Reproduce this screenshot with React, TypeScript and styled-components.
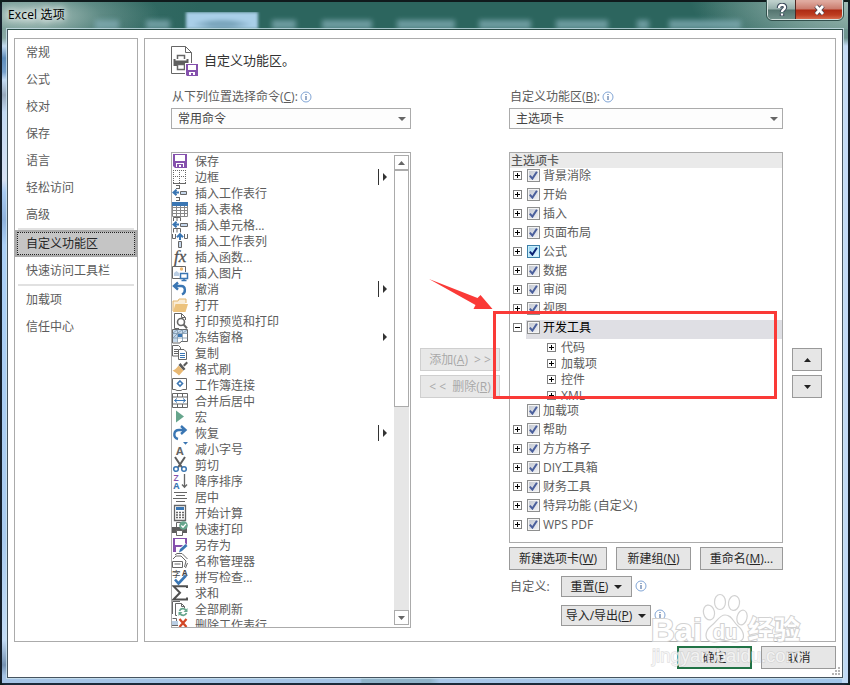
import React from 'react';
import styled, { createGlobalStyle, css } from 'styled-components';

const GlobalStyle = createGlobalStyle`
  *, *::before, *::after { box-sizing: border-box; }
  body { margin: 0; background: #0d1f1d; }
  u { text-underline-offset: 1px; text-decoration-thickness: 1px; }
`;

const font = `"Open Sans", "Noto Sans CJK SC", sans-serif`;

/* ---------- window chrome ---------- */

const WindowFrame = styled.div`
  position: relative;
  display: flex;
  flex-direction: column;
  width: 850px;
  height: 685px;
  padding: 0 7px 7px 7px;
  overflow: hidden;
  font: 12px/16px ${font};
  color: #5c5c5c;
  border-radius: 7px 7px 6px 6px;
  background:
    linear-gradient(90deg, #15202c 2px, transparent 2px, transparent 848px, #15202c 848px),
    linear-gradient(180deg, #101a1c 2px, transparent 2px, transparent 683px, #1c2a3a 683px),
    radial-gradient(ellipse 130px 40px at 30px 16px, rgba(225, 235, 230, 0.75), rgba(170, 195, 190, 0.35) 55%, transparent) 0 0 / 850px 29px no-repeat,
    radial-gradient(ellipse 160px 60px at 850px 0, rgba(190, 212, 206, 0.75), transparent) 0 0 / 850px 29px no-repeat,
    linear-gradient(90deg, #40746e, #2c655e 200px, #2c655e 700px, #528079) 0 0 / 850px 29px no-repeat,
    linear-gradient(180deg, #6d948e 0, #8aa9a5 38px, #c3daf0 46px, #5f8dbb 58px, #77a0cb 72px, #c5dcf4 80px, #98a9bd 95px, #c3d9f3 112px, #d7e1f3 180px, #a9cbf2 192px, #8fb2dc 220px, #abd0f7 245px, #a9cbef 540px, #c3dcf6 640px, #7592b2 665px, #a5c4e6 676px) 0 0 / 8px 100% no-repeat,
    linear-gradient(180deg, #789b96 0, #6f9590 38px, #c5dbf5 46px, #c0daf6 100%) 842px 0 / 8px 100% no-repeat,
    linear-gradient(90deg, #a5c4e6 360px, #8fb3c9 362px, #8fb3c9 430px, #a9c7e9 440px, #a3c6ea);
`;

const TitleBar = styled.header`
  display: flex;
  flex: 0 0 29px;
  height: 29px;
  align-items: flex-start;
  justify-content: space-between;
`;

const WindowTitle = styled.h1`
  margin: 0;
  padding: 6px 0 0 1px;
  font: 400 12px/17px ${font};
  letter-spacing: 0.15px;
  color: #000;
  text-shadow: 0 0 6px #fff, 0 0 8px #fff;
`;

const GhostRibbon = styled.div`
  position: absolute;
  left: 92px;
  top: 12px;
  display: flex;
  align-items: flex-end;
  width: 660px;
  height: 17px;
  overflow: hidden;
`;

const GhostTab = styled.i<{ $w: number; $gap: number; $active?: boolean }>`
  flex: none;
  width: ${p => p.$w}px;
  margin-left: ${p => p.$gap}px;
  height: ${p => (p.$active ? 17 : 9)}px;
  background: ${p => (p.$active ? '#a5cbe2' : '#83aeb6')};
  opacity: ${p => (p.$active ? 1 : 0.75)};
  filter: blur(${p => (p.$active ? 1.5 : 2.5)}px);
  ${p => p.$active && css`
    background: radial-gradient(ellipse 30px 6px at 50% 72%, #7ba6bd 40%, transparent), #a9cfe8;
  `}
`;

const CaptionButtons = styled.div`
  display: flex;
  height: 20px;
  border: 1px solid #d5e2df;
  border-top: 0;
  border-radius: 0 0 5px 5px;
  overflow: hidden;
  outline: 1px solid #31504c;
  z-index: 1;
`;

const CaptionButton = styled.button<{ $close?: boolean }>`
  display: grid;
  place-items: center;
  width: ${p => (p.$close ? 47 : 27)}px;
  height: 20px;
  padding: 0;
  border: 0;
  border-left: ${p => (p.$close ? '1px solid #4f2723' : '0')};
  background: ${p =>
    p.$close
      ? 'linear-gradient(180deg, #e0aba0 1px, #ca7b6d 9px, #ad2a13 10px, #bd3c20 15px, #dd7658)'
      : 'linear-gradient(180deg, #bed0cc 1px, #94aeaa 9px, #54746f 10px, #73938d 20px)'};
`;

const Client = styled.div`
  position: relative;
  display: flex;
  flex-direction: column;
  flex: none;
  width: 836px;
  height: 649px;
  border: 1px solid #46545f;
  border-top-color: #284b46;
  background: #fff;
  outline: 1px solid rgba(205, 228, 238, 0.75);
  padding: 8px 6px;
`;

const Panes = styled.div`
  display: flex;
  gap: 6px;
  height: 604px;
`;

/* ---------- sidebar ---------- */

const Sidebar = styled.nav`
  display: flex;
  flex-direction: column;
  width: 124px;
  border: 1px solid #ababab;
`;

const NavItem = styled.a<{ $active?: boolean }>`
  flex: none;
  height: 27px;
  padding-left: 11px;
  line-height: 27px;
  color: ${p => (p.$active ? '#262626' : '#5c5c5c')};
  ${p => p.$active && css`
    background: #c5c5c5;
    border: 2px solid #aaa;
    padding-left: 9px;
    line-height: 23px;
    outline: 1px dotted #222;
    outline-offset: -3px;
  `}
`;

const NavRule = styled.hr`
  flex: none;
  width: 116px;
  height: 2px;
  margin: 0 auto;
  border: 0;
  background: #e1e1e1;
`;

/* ---------- main pane ---------- */

const Main = styled.main`
  width: 692px;
  border: 1px solid #ababab;
  padding: 7px 0 0 26px;
`;

const Heading = styled.div`
  display: flex;
  gap: 5px;
  height: 43px;
`;

const HeadingText = styled.h2`
  margin: 4px 0 0;
  font: 400 13px/20px ${font};
  color: #333;
`;

const Columns = styled.div`
  display: grid;
  grid-template-columns: 240px 80px 274px 30px;
  column-gap: 9px;
  align-items: start;
`;

const Label = styled.label`
  display: flex;
  align-items: center;
  gap: 2px;
  height: 16px;
  margin: 0 0 3px 1px;
`;

const Select = styled.div`
  display: flex;
  align-items: center;
  justify-content: space-between;
  height: 21px;
  margin-bottom: 23px;
  padding: 0 4px 0 6px;
  border: 1px solid #ababab;
  background: #fdfdfd;
  color: #444;
`;

const CommandBox = styled.div`
  display: flex;
  height: 476px;
  border: 1px solid #ababab;
  overflow: hidden;
`;

const CommandList = styled.ul`
  flex: 1;
  margin: 0;
  padding: 0;
  list-style: none;
`;

const Command = styled.li`
  display: flex;
  align-items: center;
  height: 16px;
  white-space: nowrap;

  > svg { flex: none; margin-right: 7px; overflow: visible; }
`;

const CommandLabel = styled.span`
  padding-top: 2px;
`;

const Flyout = styled.span<{ $split: boolean }>`
  display: flex;
  align-items: center;
  height: 16px;
  width: 15px;
  margin-left: auto;
  padding-left: 4px;
  border-left: ${p => (p.$split ? '1px solid #333' : '1px solid transparent')};
`;

const ScrollBar = styled.div`
  display: flex;
  flex-direction: column;
  width: 15px;
  margin: 2px 1px;
  background: #e6e6e6;
`;

const ScrollButton = styled.div`
  display: grid;
  place-items: center;
  flex: none;
  height: 15px;
  border: 1px solid #ababab;
  background: #fff;
`;

const ScrollThumb = styled.div`
  flex: none;
  height: 237px;
  margin-bottom: auto;
  border: 1px solid #ababab;
  background: #fff;
`;

const Stack = styled.div<{ $top: number }>`
  display: flex;
  flex-direction: column;
  gap: 4px;
  padding-top: ${p => p.$top}px;
`;

const Button = styled.button<{ $w: number; $h?: number; $primary?: boolean }>`
  display: flex;
  align-items: center;
  justify-content: center;
  gap: 6px;
  flex: none;
  width: ${p => p.$w}px;
  height: ${p => p.$h ?? 23}px;
  padding: 0;
  font: 12px/16px ${font};
  white-space: nowrap;
  color: #262626;
  background: #e6e6e6;
  border: ${p => (p.$primary ? '2px solid #217346' : '1px solid #999')};

  &:disabled {
    color: #a8a8a8;
    background: #e8e8e8;
    border-color: #cfcfcf;
  }
`;

/* ---------- ribbon tree ---------- */

const Tree = styled.div`
  height: 391px;
  margin-bottom: 4px;
  border: 1px solid #ababab;
  overflow: hidden;
`;

const TreeHeader = styled.div`
  height: 15px;
  padding-left: 1px;
  line-height: 15px;
  font-weight: 500;
  background: #eaeaea;
  color: #5a5a5a;
`;

const TreeRow = styled.div<{ $selected?: boolean }>`
  display: flex;
  height: 19px;
  padding-left: 3px;
  padding-top: 1px;
  line-height: 14px;
  color: ${p => (p.$selected ? '#000' : '#5c5c5c')};
  ${p => p.$selected && css`
    background: linear-gradient(90deg, transparent 16px, #dfdfe4 16px);
  `}
`;

const ChildRow = styled.div`
  display: flex;
  align-items: center;
  height: 16px;
  padding-left: 37px;
  line-height: 16px;
`;

const ChildLabel = styled.span`
  padding-top: 2px;
`;

const Expander = styled.span<{ $state: 'plus' | 'minus' | 'none'; $child?: boolean }>`
  flex: none;
  width: 9px;
  height: 9px;
  margin: ${p => (p.$child ? '0 5px 0 0' : '2px 5px 0 0')};
  ${p => p.$state !== 'none' && css`
    border: 1px solid #808080;
    background:
      linear-gradient(#000, #000) center / 5px 1px no-repeat,
      linear-gradient(#000, #000) center / 1px ${p.$state === 'plus' ? 5 : 1}px no-repeat,
      #fff;
  `}
`;

const CheckBox = styled.span<{ $hot?: boolean }>`
  display: grid;
  place-items: center;
  flex: none;
  width: 13px;
  height: 13px;
  margin-right: 3px;
  border: 1px solid ${p => (p.$hot ? '#3c7fa8' : '#8e8f8f')};
  box-shadow: inset 0 0 0 1px ${p => (p.$hot ? '#c9eefb' : '#f4f4f4')};
  background: ${p => (p.$hot ? 'linear-gradient(135deg, #8fd5f5, #eefaff)' : 'linear-gradient(135deg, #bfc4ce, #f4f5f8)')};
`;

const ButtonRow = styled.div<{ $mb: number; $indent?: number; $gap?: number }>`
  display: flex;
  gap: ${p => p.$gap ?? 9}px;
  margin-bottom: ${p => p.$mb}px;
  padding-left: ${p => p.$indent ?? 0}px;
`;

const CustomLabel = styled.span`
  width: 43px;
  padding: 3px 0 0 1px;
  letter-spacing: 0.2px;
  white-space: nowrap;
`;

const InfoWrap = styled.span`
  height: 19px;
  display: flex;
  align-items: center;
`;

const Footer = styled.footer`
  display: flex;
  justify-content: flex-end;
  gap: 9px;
  padding-top: 4px;
`;

const Grip = styled.svg`
  position: absolute;
  right: 1px;
  bottom: 1px;
`;

const Highlight = styled.div`
  position: absolute;
  left: 493px;
  top: 311px;
  width: 284px;
  height: 88px;
  border: 3px solid #fa3a37;
  pointer-events: none;
`;

const Pointer = styled.svg`
  position: absolute;
  left: 428px;
  top: 277px;
`;

const Watermark = styled.svg`
  position: absolute;
  left: 645px;
  top: 588px;
`;

/* ---------- glyphs ---------- */

const G = '#666';
const B = '#3a76b3';
const P = '#8551ad';
const N = '#66a58c';
const R = '#d24726';

const Tri = ({ dir, color = '#444', w = 7, h = 4 }: { dir: 'up' | 'down' | 'right'; color?: string; w?: number; h?: number }) => (
  <svg width={w} height={h} viewBox={`0 0 ${w} ${h}`}>
    <path
      fill={color}
      d={dir === 'up' ? `M0 ${h}L${w / 2} 0L${w} ${h}Z` : dir === 'down' ? `M0 0H${w}L${w / 2} ${h}Z` : `M0 0L${w} ${h / 2}L0 ${h}Z`}
    />
  </svg>
);

const Info = () => (
  <svg width="12" height="12" viewBox="0 0 12 12">
    <circle cx="6" cy="6" r="5" fill="#fff" stroke="#82a6d6" />
    <path d="M6 5v4M6 3v1" stroke="#46699e" strokeWidth="1.1" />
  </svg>
);

const Check = ({ hot }: { hot?: boolean }) => (
  <svg width="9" height="9" viewBox="0 0 9 9">
    <path d="M0.8 4.6L3.4 7.6L7.9 0.8" fill="none" stroke={hot ? '#0a2173' : '#4a5f9c'} strokeWidth="2" />
  </svg>
);

const icons: Record<string, React.ReactNode> = {
  save: (
    <>
      <path d="M1 1h14v14H3l-2-2z" fill={P} />
      <path d="M3 2h10v6H3zM4 10h8v4H4z" fill="#fff" />
      <path d="M5 11h6v3H9v-2H7v2H5z" fill={P} />
    </>
  ),
  border: (
    <>
      <path d="M1.5 1v13M7.5 1v13M13.5 1v13M1 1.5h13M1 7.5h13" stroke={G} strokeDasharray="1 1" />
      <path d="M1 14.5h13" stroke={G} />
    </>
  ),
  insRow: (
    <>
      <path d="M4 .5h4M7.5 0v3.5M4 3.5h4M4 12.5h4M7.5 12v4M4 15.5h4" stroke={G} fill="none" />
      <path d="M7 7.5H2M4.5 4.7L1.5 7.5l3 2.8" stroke={B} strokeWidth="2" fill="none" />
      <path d="M8.5 6.5h6v3h-6z" fill="#c5d6ea" stroke={G} />
    </>
  ),
  table: (
    <>
      <path d="M.5 2.5h15v13H.5zM.5 6.5h15M.5 9.5h15M.5 12.5h15M4.5 4v12M8.5 4v12M12.5 4v12" stroke="#888" fill="#fff" />
      <path d="M0 1h16v4H0z" fill={B} />
    </>
  ),
  insCell: (
    <>
      <path d="M1.5 4V.5h7V4M5 .5V4M1.5 15.5v-4h7v4M5 11.5v4" stroke={G} fill="none" />
      <path d="M7 7.5H2M4.5 4.7L1.5 7.5l3 2.8" stroke={B} strokeWidth="2" fill="none" />
      <path d="M8.5 6.5h7v3h-7z" fill="#c5d6ea" stroke={G} />
    </>
  ),
  insCol: (
    <>
      <path d="M.5 1v4.5h3V1M12.5 1v4.5h3V1" stroke={G} fill="none" />
      <path d="M8 7V2M5 4.2L8 1.2l3 3" stroke={B} strokeWidth="2" fill="none" />
      <path d="M6.5 8.5h3v6h-3z" fill="#c5d6ea" stroke={G} />
    </>
  ),
  fx: (
    <text x="2" y="12.5" fontFamily="Liberation Serif" fontStyle="italic" fontSize="17" fill="#505050" stroke="#505050" strokeWidth=".3">fx</text>
  ),
  picture: (
    <>
      <path d="M8 13.5H.5V1.5h13V7" stroke={G} fill="#fff" />
      <circle cx="9.5" cy="4" r="1.7" fill="#eab56f" />
      <path d="M2 11V8l2.500-2L7 8v3z" fill="#b9cde3" />
      <path d="M8.5 8.500h7v5h-7zM12 13.500v1.500M9.500 15.500h5" stroke={B} strokeWidth="1.500" fill="#fff" />
    </>
  ),
  undo: <path d="M6 1.500L2 5l4 3.700M2.500 5h6.700c4.500 0 5 6.500.8 8.500" stroke={B} strokeWidth="2.400" fill="none" />,
  open: (
    <>
      <path d="M1 14V4h5l1-2h7v4" fill="#f9ecd6" stroke="#e3b66f" />
      <path d="M1 15l2.500-8H16l-2.500 8z" fill="#ecc27c" />
    </>
  ),
  preview: (
    <>
      <path d="M7 15.500H2.500V.5h7l4 4V7M9.500.5v4h4" stroke={G} fill="none" />
      <circle cx="9" cy="9" r="3.500" stroke={G} strokeWidth="1.600" fill="#fff" />
      <path d="M11.500 11.500l3.500 3.700" stroke={G} strokeWidth="2" />
    </>
  ),
  freeze: (
    <>
      <path d="M.5.5h15v12H9l-1 1.500H.5z" stroke={G} fill="#fff" />
      <path d="M1 1h14v3H5v9H1z" fill="#c5d9ec" />
      <path d="M.5 4.500h15M.5 9h15M5.500.5v13M10.500.5v12M1 4l4-3M6 4l4-3M11 4l4-3M1 9l4-4" stroke="#7b94ab" strokeWidth=".8" />
      <path d="M6 5h4v3H6z" fill={B} />
    </>
  ),
  copy: (
    <>
      <path d="M.5.500h6l2 2v8.500h-8zM2 4.500h4M2 6.500h4M2 8.500h4" stroke={G} fill="#fff" />
      <path d="M6.500 4.500h5.500l2.500 2.500v7.500h-8z" stroke={G} fill="#fff" />
      <path d="M8 8.500h5M8 10.500h5M8 12.500h5" stroke={B} />
    </>
  ),
  brush: (
    <>
      <path d="M6.500 4.500l5 5-4.500 5c-2-2-4-3.500-6.500-5 2-.5 4-2 6-5z" fill="#e8b873" />
      <path d="M6.500 4l2-2L13.500 8l-2 1.500zM11 4l3.500-3.500L16 2l-3.500 3.500z" fill="#5a5a5a" />
    </>
  ),
  connect: (
    <>
      <path d="M.5 1.500h14v11h-4l-1.500 1h-4l-2-1H.5z" stroke={G} fill="#fff" />
      <path d="M8 4l2.500 2.500L8 9 5.500 6.500z" stroke={B} strokeWidth="1.600" fill="none" />
    </>
  ),
  merge: (
    <>
      <path d="M.5.500h15v14H.5zM.5 4h15M.5 11h15M5.500.500V4M10.500.500V4M5.500 11v3.500M10.500 11v3.500" stroke={G} fill="#fff" />
      <path d="M2.500 7.500h11M5 5.500l-2.500 2L5 9.500M11 5.500l2.500 2-2.500 2" stroke={B} fill="none" />
    </>
  ),
  macro: <path d="M4 1.500l8 6-8 6z" fill={N} />,
  redo: <path d="M9 1l4.500 4L9 9M13 5H7c-5.500 0-6.500 7.500-1 9" stroke={B} strokeWidth="2.400" fill="none" />,
  shrink: (
    <>
      <text x="4" y="14" fontFamily="Open Sans" fontWeight="700" fontSize="11" fill={G}>A</text>
      <path d="M11 1h5l-2.500 2.700z" fill={B} />
    </>
  ),
  cut: (
    <>
      <path d="M3 0l7 10.500M13 0L6 10.500" stroke="#5d5d5d" strokeWidth="2" />
      <circle cx="4" cy="12" r="2.300" stroke={B} strokeWidth="1.500" fill="none" />
      <circle cx="12" cy="12" r="2.300" stroke={B} strokeWidth="1.500" fill="none" />
    </>
  ),
  sort: (
    <>
      <text x="1.500" y="7.500" fontFamily="Open Sans" fontSize="9" fontWeight="600" fill={P}>Z</text>
      <text x="1.200" y="15.500" fontFamily="Open Sans" fontSize="9" fontWeight="700" fill={B}>A</text>
      <path d="M12.500 1v13M10 11.500l2.500 2.700 2.500-2.700" stroke={G} strokeWidth="1.300" fill="none" />
    </>
  ),
  center: <path d="M2 3.500h13M4 6.500h9M1 9.500h14M4 12.500h9" stroke={G} />,
  calc: (
    <>
      <path d="M2.500.500h11v15h-11z" stroke={G} fill="#fff" strokeWidth="1.300" />
      <path d="M4 2h8v3H4z" fill={B} />
      <path d="M4 7.500h8M4 10h8M4 12.500h8" stroke={G} strokeWidth="1.600" strokeDasharray="2 1" />
    </>
  ),
  print: (
    <>
      <path d="M4.500 6V1.500h5V6" stroke={G} fill="#fff" />
      <path d="M0 6h15v6H0z" fill="#5e5e5e" />
      <path d="M4.500 9.500h6v5h-6z" stroke={G} fill="#fff" />
      <circle cx="11.500" cy="4.500" r="4.300" fill={N} />
      <path d="M9.300 4.500l1.700 1.700 3-3.300" stroke="#fff" strokeWidth="1.300" fill="none" />
    </>
  ),
  saveAs: (
    <>
      <path d="M1 1h14v7l-7 7H1z" fill={P} />
      <path d="M3 2h10v6H3zM4 10h6l-3 5H4z" fill="#fff" />
      <path d="M6 16l1.500-4.500L13 6l3 3-5.500 5.500z" fill="#fff" />
      <path d="M7 15.500l1-3.500 5.500-5 2 2-5.500 5z" fill={B} />
    </>
  ),
  names: (
    <>
      <path d="M.5 8.500h10v6H.5zM2.500 11h6" stroke={G} fill="#fff" />
      <path d="M1 6l3-3h5l5 5-1.500 6M3 2L5 .500h5L15.500 6M13.500 15l2-5" stroke={G} fill="none" />
    </>
  ),
  spell: (
    <>
      <text x="0" y="7.500" fontFamily="Noto Sans CJK SC" fontSize="8.500" fill="#444">字</text>
      <text x="10" y="6.500" fontFamily="Open Sans" fontWeight="700" fontSize="8" fill="#444">A</text>
      <path d="M3 10.500l3.500 4L14 6.500" stroke={B} strokeWidth="2.600" fill="none" />
    </>
  ),
  sum: <path d="M15 3V1.200H1.500L8 7.800 1.500 14.500H15V12.500" stroke="#505050" strokeWidth="2" fill="none" />,
  refresh: (
    <>
      <path d="M.5 13V.500H8M5 14.500H3.500v-12h6l3 3V7M9.500 2.500v3h3" stroke={G} fill="none" />
      <path d="M7.500 10c1-3 5-3 6.500-.5M14.500 12c-1 3-5 3-6.500.5" stroke={N} strokeWidth="1.700" fill="none" />
      <path d="M15.500 7v4h-4zM6.500 15v-4h4z" fill={N} />
    </>
  ),
  delRow: (
    <>
      <path d="M.5 1.500h4V4M0 8.500h6" stroke={G} fill="none" />
      <path d="M0 4h6v4H0z" fill="#b9cde3" />
      <path d="M7.500 2l7 8M14.500 2l-7 8" stroke={R} strokeWidth="2.300" />
    </>
  ),
};

const Icon = ({ name }: { name: string }) => (
  <svg width="16" height="16" viewBox="0 0 16 16">{icons[name]}</svg>
);

const RibbonIcon = () => (
  <svg width="28" height="31" viewBox="0 0 28 31">
    <path d="M14 27.500H.5V.500h14l6 6V18M14.500.500v6h6" stroke={G} fill="#fff" />
    <path d="M6.500 13V9.500h7V13" stroke={G} strokeWidth="1.500" fill="#fff" />
    <path d="M2.500 13h2v1.500h11V13h2v7h-15z" fill="#5e5e5e" />
    <path d="M6.500 18.500h7v5h-7z" stroke={G} strokeWidth="1.500" fill="#fff" />
    <path d="M14 17h14v14H14z" fill="#fff" />
    <path d="M15 18h12v12H16l-1-1z" fill={P} />
    <path d="M17 19h8v5h-8zM18 26h6v3h-2v-2h-2v2h-2z" fill="#fff" />
  </svg>
);

/* ---------- data ---------- */

const navGroups = [
  ['常规', '公式', '校对', '保存', '语言', '轻松访问', '高级'],
  ['自定义功能区', '快速访问工具栏'],
  ['加载项', '信任中心'],
];

type Cmd = [icon: string, label: string, flyout?: 'split' | 'menu'];

const commands: Cmd[] = [
  ['save', '保存'],
  ['border', '边框', 'split'],
  ['insRow', '插入工作表行'],
  ['table', '插入表格'],
  ['insCell', '插入单元格...'],
  ['insCol', '插入工作表列'],
  ['fx', '插入函数...'],
  ['picture', '插入图片'],
  ['undo', '撤消', 'split'],
  ['open', '打开'],
  ['preview', '打印预览和打印'],
  ['freeze', '冻结窗格', 'menu'],
  ['copy', '复制'],
  ['brush', '格式刷'],
  ['connect', '工作簿连接'],
  ['merge', '合并后居中'],
  ['macro', '宏'],
  ['redo', '恢复', 'split'],
  ['shrink', '减小字号'],
  ['cut', '剪切'],
  ['sort', '降序排序'],
  ['center', '居中'],
  ['calc', '开始计算'],
  ['print', '快速打印'],
  ['saveAs', '另存为'],
  ['names', '名称管理器'],
  ['spell', '拼写检查...'],
  ['sum', '求和'],
  ['refresh', '全部刷新'],
  ['delRow', '删除工作表行'],
];

interface Tab {
  label: string;
  hot?: boolean;
  leaf?: boolean;
  children?: string[];
}

const tabs: Tab[] = [
  { label: '背景消除' },
  { label: '开始' },
  { label: '插入' },
  { label: '页面布局' },
  { label: '公式', hot: true },
  { label: '数据' },
  { label: '审阅' },
  { label: '视图' },
  { label: '开发工具', children: ['代码', '加载项', '控件', 'XML'] },
  { label: '加载项', leaf: true },
  { label: '帮助' },
  { label: '方方格子' },
  { label: 'DIY工具箱' },
  { label: '财务工具' },
  { label: '特异功能 (自定义)' },
  { label: 'WPS PDF' },
];

const ghostTabs: [gap: number, w: number, active?: boolean][] = [
  [3, 24], [27, 24], [16, 72, true], [14, 24], [26, 50], [25, 58], [24, 52], [25, 52], [29, 12], [20, 72],
];

/* ---------- app ---------- */

export default function App() {
  return (
    <>
      <GlobalStyle />
      <WindowFrame>
        <GhostRibbon>
          {ghostTabs.map(([gap, w, active], i) => (
            <GhostTab key={i} $gap={gap} $w={w} $active={active} />
          ))}
        </GhostRibbon>
        <TitleBar>
          <WindowTitle>Excel 选项</WindowTitle>
          <CaptionButtons>
            <CaptionButton aria-label="Help">
              <svg width="12" height="14" viewBox="0 0 12 14">
                <path d="M3 5c0-4 6-4 6-.8C9 6.500 6 6.500 6 9M6 10.500v2.500" stroke="#3c4a5c" strokeWidth="4.500" fill="none" />
                <path d="M3 5c0-4 6-4 6-.8C9 6.500 6 6.500 6 9M6 10.500v2" stroke="#fff" strokeWidth="2.300" fill="none" />
              </svg>
            </CaptionButton>
            <CaptionButton $close aria-label="Close">
              <svg width="13" height="12" viewBox="0 0 13 12">
                <path d="M3 2l7 8M10 2l-7 8" stroke="#4b4450" strokeWidth="4.500" />
                <path d="M3 2l7 8M10 2l-7 8" stroke="#fff" strokeWidth="2.700" />
              </svg>
            </CaptionButton>
          </CaptionButtons>
        </TitleBar>

        <Client>
          <Panes>
            <Sidebar>
              {navGroups.map((group, g) => (
                <React.Fragment key={g}>
                  {g > 0 && <NavRule />}
                  {group.map(item => (
                    <NavItem key={item} $active={item === '自定义功能区'}>{item}</NavItem>
                  ))}
                </React.Fragment>
              ))}
            </Sidebar>

            <Main>
              <Heading>
                <RibbonIcon />
                <HeadingText>自定义功能区。</HeadingText>
              </Heading>

              <Columns>
                <div>
                  <Label><span>从下列位置选择命令(<u>C</u>):</span><Info /></Label>
                  <Select>常用命令<Tri dir="down" color="#666" w={8} /></Select>
                  <CommandBox>
                    <CommandList>
                      {commands.map(([icon, label, flyout]) => (
                        <Command key={label}>
                          <Icon name={icon} />
                          <CommandLabel>{label}</CommandLabel>
                          {flyout && (
                            <Flyout $split={flyout === 'split'}>
                              <Tri dir="right" w={4} h={8} color="#333" />
                            </Flyout>
                          )}
                        </Command>
                      ))}
                    </CommandList>
                    <ScrollBar>
                      <ScrollButton><Tri dir="up" color="#666" /></ScrollButton>
                      <ScrollThumb />
                      <ScrollButton><Tri dir="down" color="#666" /></ScrollButton>
                    </ScrollBar>
                  </CommandBox>
                </div>

                <Stack $top={259}>
                  <Button $w={80} disabled><span>添加(<u>A</u>)</span><span>&gt; &gt;</span></Button>
                  <Button $w={80} disabled><span>&lt; &lt;</span><span>删除(<u>R</u>)</span></Button>
                </Stack>

                <div>
                  <Label><span>自定义功能区(<u>B</u>):</span><Info /></Label>
                  <Select>主选项卡<Tri dir="down" color="#666" w={8} /></Select>
                  <Tree>
                    <TreeHeader>主选项卡</TreeHeader>
                    {tabs.map((tab, i) => (
                      <React.Fragment key={i}>
                        <TreeRow $selected={!!tab.children}>
                          <Expander $state={tab.leaf ? 'none' : tab.children ? 'minus' : 'plus'} />
                          <CheckBox $hot={tab.hot}><Check hot={tab.hot} /></CheckBox>
                          {tab.label}
                        </TreeRow>
                        {tab.children?.map(child => (
                          <ChildRow key={child}>
                            <Expander $state="plus" $child />
                            <ChildLabel>{child}</ChildLabel>
                          </ChildRow>
                        ))}
                      </React.Fragment>
                    ))}
                  </Tree>
                  <ButtonRow $mb={6}>
                    <Button $w={98}><span>新建选项卡(<u>W</u>)</span></Button>
                    <Button $w={75}><span>新建组(<u>N</u>)</span></Button>
                    <Button $w={83}><span>重命名(<u>M</u>)...</span></Button>
                  </ButtonRow>
                  <ButtonRow $mb={8} $gap={0}>
                    <CustomLabel>自定义:</CustomLabel>
                    <ButtonRow $mb={0} $gap={3} $indent={9}>
                      <Button $w={71} $h={21}><span>重置(<u>E</u>)</span><Tri dir="down" color="#222" w={8} /></Button>
                      <InfoWrap><Info /></InfoWrap>
                    </ButtonRow>
                  </ButtonRow>
                  <ButtonRow $mb={0} $gap={3} $indent={52}>
                    <Button $w={90} $h={21}><span>导入/导出(<u>P</u>)</span><Tri dir="down" color="#222" w={8} /></Button>
                    <InfoWrap><Info /></InfoWrap>
                  </ButtonRow>
                </div>

                <Stack $top={259}>
                  <Button $w={30} aria-label="Up"><Tri dir="up" color="#222" /></Button>
                  <Button $w={30} aria-label="Down"><Tri dir="down" color="#222" /></Button>
                </Stack>
              </Columns>
            </Main>
          </Panes>

          <Footer>
            <Button $w={75} $primary>确定</Button>
            <Button $w={75}>取消</Button>
          </Footer>

          <Grip width="9" height="9" viewBox="0 0 9 9">
            <path fill="#b5b5b5" d="M6 0h2v2H6zM3 3h2v2H3zM6 3h2v2H6zM0 6h2v2H0zM3 6h2v2H3zM6 6h2v2H6z" />
          </Grip>
        </Client>

        <Highlight />
        <Pointer width="66" height="34" viewBox="428 277 66 34">
          <path fill="#fa3a37" d="M429 279L477.500 298L480.500 295L492.500 309H473.500L475.500 305Z" />
        </Pointer>

        <Watermark width="175" height="82" viewBox="0 0 175 82">
          <g fill="#fff" fillOpacity=".78" stroke="#d2d2d2" strokeWidth="1.200">
            <ellipse cx="64" cy="24.500" rx="5.500" ry="7.500" transform="rotate(-12 64 24.500)" />
            <ellipse cx="75" cy="14" rx="5.500" ry="7.500" />
            <ellipse cx="89" cy="15" rx="5.500" ry="7.500" transform="rotate(8 89 15)" />
            <ellipse cx="97" cy="29.500" rx="5" ry="7.500" transform="rotate(14 97 29.500)" />
            <path d="M80 27c7 0 8 7 13 11 6 5 9 15-1 16-6 .500-8-1.500-12-1.500s-7 2-12 1.500c-10-1-8-11-2-16 6-4 8-11 14-11z" />
          </g>
          <g fontFamily="Liberation Sans" fontWeight="700" fill="#fff" stroke="#d2d2d2" paintOrder="stroke">
            <text x="6" y="53" fontSize="31" textLength="51" lengthAdjust="spacingAndGlyphs" strokeWidth="2">Bai</text>
            <text x="68" y="51" fontSize="20" textLength="24" lengthAdjust="spacingAndGlyphs" strokeWidth="2">du</text>
            <text x="103" y="51" fontSize="26" textLength="52" lengthAdjust="spacingAndGlyphs" strokeWidth="2" fontFamily="Noto Sans CJK SC">经验</text>
          </g>
          <text x="7" y="73.500" fontFamily="Liberation Sans" fontSize="17.500" textLength="149" lengthAdjust="spacingAndGlyphs" fill="#fff" fillOpacity=".7" stroke="#c8c8c8" strokeOpacity=".55" strokeWidth="1.300" paintOrder="stroke">jingyan.baidu.com</text>
        </Watermark>
      </WindowFrame>
    </>
  );
}
